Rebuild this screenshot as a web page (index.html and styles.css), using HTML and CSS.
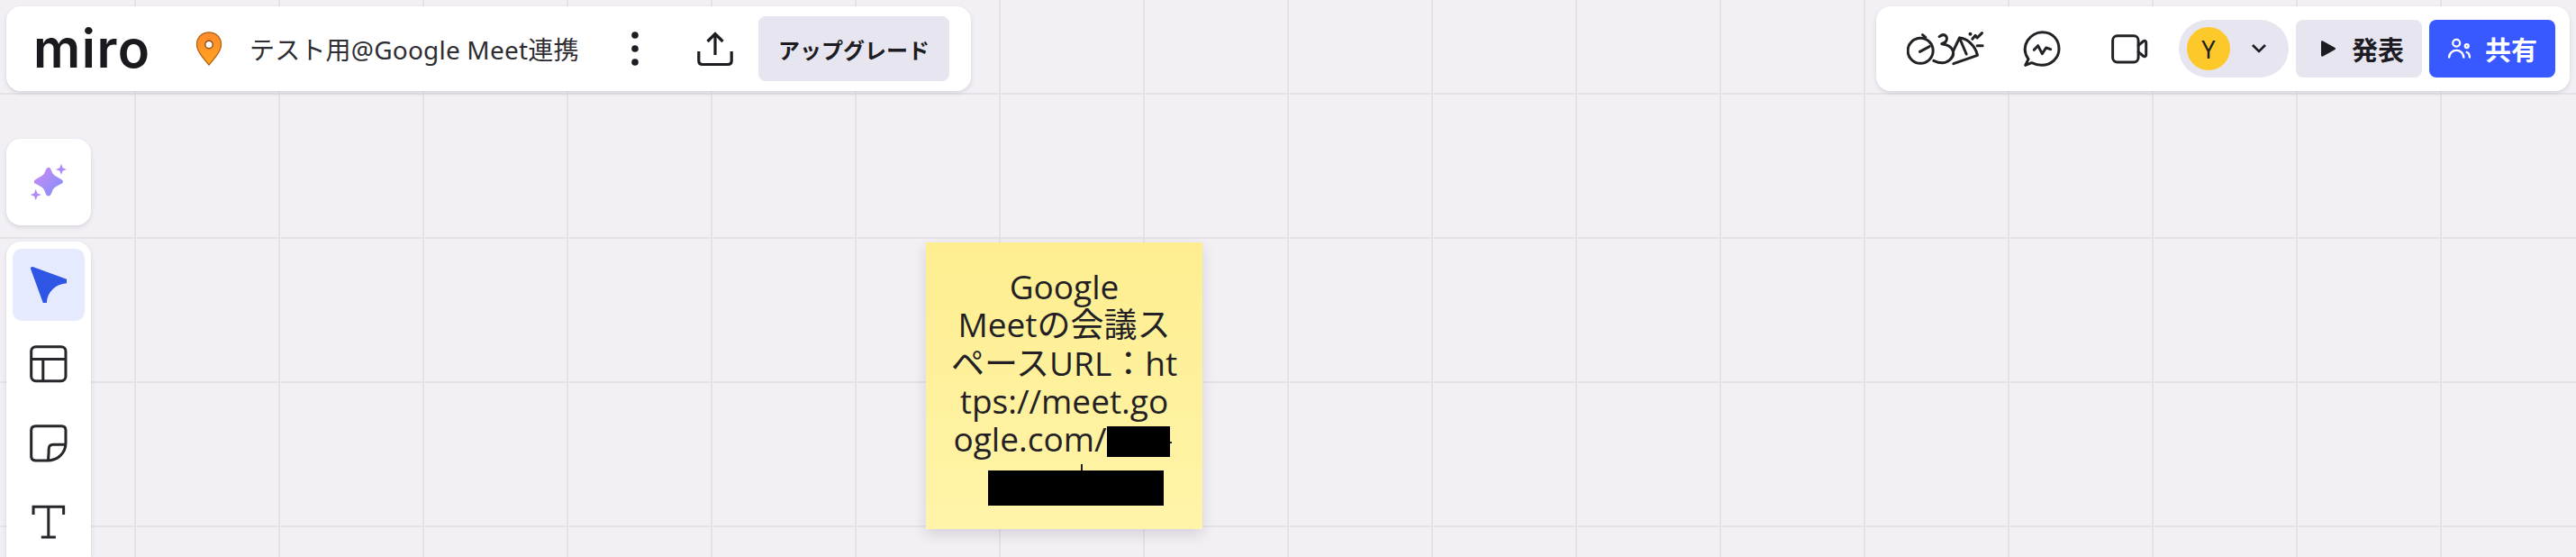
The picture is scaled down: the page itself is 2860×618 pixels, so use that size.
FILE: index.html
```html
<!DOCTYPE html>
<html lang="ja">
<head>
    <meta charset="UTF-8">
    <title>テスト用@Google Meet連携 - Miro</title>
    <link rel="stylesheet" href="styles.css">
</head>
<body>
    <div class="board">
        <header class="topbar">
            <div class="panel panel-left">
                <span class="logo">miro</span>
                <svg class="pin" viewBox="0 0 30 38">
                    <defs>
                        <linearGradient id="pin-fill" x1="0" y1="0" x2="0" y2="1">
                            <stop offset="0" stop-color="#ff8a2e"/>
                            <stop offset="1" stop-color="#ffa51c"/>
                        </linearGradient>
                    </defs>
                    <path d="M15 1C7 1 1.500 6.800 1.500 14.300C1.500 22 9 30 15 37C21 30 28.500 22 28.500 14.300C28.500 6.800 23 1 15 1Z" fill="url(#pin-fill)" stroke="#b8681c" stroke-width="1.400"/>
                    <circle cx="15" cy="14.500" r="4.200" fill="#fff" stroke="#8a4a12" stroke-width="1.400"/>
                </svg>
                <span class="board-title">テスト用@Google Meet連携</span>
                <svg class="kebab" viewBox="0 0 10 38">
                    <circle cx="5" cy="4" r="3.800"/>
                    <circle cx="5" cy="19" r="3.800"/>
                    <circle cx="5" cy="34" r="3.800"/>
                </svg>
                <svg class="upload" viewBox="0 0 40 40">
                    <path d="M20 27V4M11.500 12L20 3.500L28.500 12M1.800 23V33.500C1.800 36 3.500 37.500 6 37.500H34C36.500 37.500 38.200 36 38.200 33.500V23"/>
                </svg>
                <button class="btn btn-grey btn-upgrade">アップグレード</button>
            </div>
            <div class="panel panel-right">
                <svg class="icon-fun" viewBox="170 100 260 120">
                    <circle cx="215" cy="167" r="42"/>
                    <path d="M222 114L232 122M213 170L245 153"/>
                    <path d="M278 120C298 104 310 125 298 138L286 144C325 148 335 178 312 198C296 212 276 208 259 200"/>
                    <path d="M325 210L405 182C398 150 370 125 345 124L368 178M345 124L325 166"/>
                    <path d="M388 128L398 116L404 124L420 108M404 150H422"/>
                    <circle class="dot" cx="381" cy="111" r="6"/>
                </svg>
                <svg class="icon-chat" viewBox="555 95 135 135">
                    <path d="M576 196C545 150 585 106 622 106C660 106 678 135 678 162C678 192 652 216 620 216C606 216 596 212 587 208L566 216Z"/>
                    <path d="M595 165L608 151L622 178L635 158L650 163"/>
                </svg>
                <svg class="icon-video" viewBox="845 110 130 105">
                    <rect x="853" y="118" width="86" height="88" rx="15"/>
                    <path d="M939 150L956 136C960 133 965 135 965 140V182C965 187 960 189 956 186L939 172"/>
                </svg>
                <div class="user-pill">
                    <span class="avatar">Y</span>
                    <svg class="chevron" viewBox="0 0 18 12"><path d="M2 2L9 9L16 2"/></svg>
                </div>
                <button class="btn btn-grey btn-present">
                    <svg class="play" viewBox="0 0 17 18"><path d="M1 1.500C1 0.500 2 0 3 0.500L16.500 8C17.200 8.500 17.200 9.500 16.500 10L3 17.500C2 18 1 17.500 1 16.500Z"/></svg>
                    発表
                </button>
                <button class="btn btn-share">
                    <svg class="users" viewBox="775 125 76 72">
                        <circle cx="803" cy="142" r="12"/>
                        <path d="M778 193C778 158 828 158 828 193"/>
                        <circle cx="838" cy="152" r="6"/>
                        <path d="M835 172C845 174 848 182 848 193"/>
                    </svg>
                    共有
                </button>
            </div>
        </header>

        <aside class="sidebar">
            <div class="panel panel-magic">
                <svg class="sparkle" viewBox="100 124 125 124">
                    <defs>
                        <linearGradient id="spark-fill" x1="0" y1="0" x2="1" y2="1">
                            <stop offset="0" stop-color="#d08af2"/>
                            <stop offset="1" stop-color="#7c8ffb"/>
                        </linearGradient>
                    </defs>
                    <path fill="url(#spark-fill)" d="M162 138C169 138 171 148 176 158C181 166 192 170 204 177C212 182 212 188 204 192C192 198 180 204 176 212C172 222 170 232 162 232C154 232 152 222 148 212C144 204 132 198 120 192C112 188 112 182 120 177C132 170 143 166 148 158C153 148 155 138 162 138Z"/>
                    <path fill="#ad8cf9" d="M204 126L209 139L222 144L209 149L204 162L199 149L186 144L199 139Z"/>
                    <path fill="#ad8cf9" d="M120 209L125 223L138 228L125 233L120 246L115 233L102 228L115 223Z"/>
                </svg>
            </div>
            <div class="panel panel-tools">
                <div class="tool tool-active">
                    <svg class="tool-icon" viewBox="100 465 125 125">
                        <path class="cursor" d="M103 475C103 468 107 467 112 469L222 509V522C185 525 158 550 156 587H144Z"/>
                    </svg>
                </div>
                <div class="tool">
                    <svg class="tool-icon" viewBox="100 40 125 125">
                        <rect x="105" y="45" width="114" height="113" rx="15"/>
                        <path d="M105 86H219M144 86V158"/>
                    </svg>
                </div>
                <div class="tool">
                    <svg class="tool-icon" viewBox="100 304 125 125">
                        <path d="M120 309H205C214 309 219 314 219 323V365C219 398 192 423 160 423H120C110 423 105 418 105 408V323C105 314 110 309 120 309Z"/>
                        <path d="M161 421C162 410 163 400 163 385C163 376 168 370 177 370H219"/>
                    </svg>
                </div>
                <div class="tool">
                    <svg class="tool-icon" viewBox="100 570 125 125">
                        <path d="M112 606V580H212V606M162 580V680M138 680H186"/>
                    </svg>
                </div>
            </div>
        </aside>

        <div class="sticky">
            <p class="sticky-text">Google<br>Meetの会議ス<br>ペースURL：ht<br>tps://meet.go<br>ogle.com/<span class="sticky-gap"></span></p>
            <span class="mask mask-one"></span>
            <span class="mask mask-two"></span>
        </div>
    </div>
</body>
</html>
```

FILE: styles.css
```css
* {
    box-sizing: border-box;
}
html, body {
    margin: 0;
    height: 100%;
    overflow: hidden;
}
body {
    font-family: "Noto Sans", "Noto Sans CJK JP", sans-serif;
    color: #1c1c1e;
}
svg {
    display: block;
    flex: none;
}
.board {
    position: relative;
    display: flex;
    flex-direction: column;
    height: 618px;
    overflow: hidden;
    padding: 7px 7px 0;
    background-color: #f2f0f4;
    background-image:
        linear-gradient(to right, #e5e3e7 2px, transparent 2px),
        linear-gradient(to bottom, #e5e3e7 2px, transparent 2px);
    background-size: 160px 160px;
    background-position: 149px 103px;
}
.panel {
    background: #fff;
    border-radius: 16px;
    box-shadow: 0 2px 5px rgba(20, 10, 60, 0.12);
}
.topbar {
    display: flex;
    flex: none;
    justify-content: space-between;
    height: 94px;
}
.panel-left, .panel-right {
    display: flex;
    align-items: center;
}
.panel-left {
    width: 1071px;
    padding-left: 30px;
}
.panel-right {
    width: 770px;
    padding-left: 34px;
}
.logo {
    width: 131px;
    font-family: Inter, sans-serif;
    font-size: 58px;
    font-weight: 600;
    line-height: 56px;
    letter-spacing: 1.500px;
    color: #1a1a1e;
}
.pin {
    width: 30px;
    height: 38px;
    margin-left: 49px;
}
.board-title {
    width: 423px;
    margin-left: 30px;
    font-size: 28px;
    letter-spacing: 0.200px;
    white-space: nowrap;
    color: #2d2d33;
}
.kebab {
    width: 10px;
    height: 38px;
    fill: #1c1c22;
}
.upload {
    width: 40px;
    height: 40px;
    margin-left: 64px;
    fill: none;
    stroke: #1c1c22;
    stroke-width: 3.200;
}
.btn {
    display: flex;
    align-items: center;
    border: none;
    border-radius: 8px;
    font-family: inherit;
    font-weight: 700;
}
.btn-grey {
    background: #e7e6f0;
    color: #1c1c22;
}
.btn-upgrade {
    justify-content: center;
    width: 212px;
    height: 72px;
    margin-left: 28px;
    font-size: 24px;
}
.icon-fun, .icon-chat, .icon-video {
    fill: none;
    stroke: #222226;
    stroke-width: 9;
    stroke-linecap: round;
    stroke-linejoin: round;
}
.icon-fun {
    width: 87px;
    height: 40px;
}
.icon-fun .dot {
    fill: #222226;
    stroke: none;
}
.icon-chat {
    width: 45px;
    height: 45px;
    margin-left: 41px;
}
.icon-video {
    width: 43px;
    height: 35px;
    margin-left: 53px;
}
.user-pill {
    display: flex;
    align-items: center;
    width: 122px;
    height: 64px;
    margin-left: 33px;
    padding-left: 9px;
    border-radius: 32px;
    background: #e7e6f0;
}
.avatar {
    display: flex;
    align-items: center;
    justify-content: center;
    width: 48px;
    height: 48px;
    border-radius: 50%;
    background: #fcc82a;
    font-size: 27px;
    color: #1c1c22;
}
.chevron {
    width: 18px;
    height: 12px;
    margin-left: 23px;
    fill: none;
    stroke: #1c1c22;
    stroke-width: 2.600;
}
.btn-present, .btn-share {
    width: 140px;
    height: 64px;
    font-size: 29px;
}
.btn-present {
    margin-left: 8px;
    padding-left: 27px;
}
.play {
    width: 17px;
    height: 18px;
    margin-right: 18px;
    fill: #1c1c22;
}
.btn-share {
    margin-left: 8px;
    padding-left: 21px;
    background: #3859ff;
    color: #fff;
}
.users {
    width: 25px;
    height: 24px;
    margin-right: 16px;
    fill: none;
    stroke: #fff;
    stroke-width: 7;
}
.sidebar {
    display: flex;
    flex: 1;
    flex-direction: column;
    gap: 18px;
    min-height: 0;
    width: 94px;
    margin-top: 53px;
}
.panel-magic {
    display: flex;
    flex: none;
    align-items: center;
    justify-content: center;
    height: 96px;
}
.sparkle {
    width: 42px;
    height: 42px;
}
.panel-tools {
    display: flex;
    flex: 1;
    flex-direction: column;
    align-items: center;
    gap: 8px;
    min-height: 0;
    overflow: hidden;
    padding-top: 8px;
    border-radius: 16px 16px 0 0;
}
.tool {
    display: flex;
    flex: none;
    align-items: center;
    justify-content: center;
    width: 80px;
    height: 80px;
    border-radius: 10px;
}
.tool-active {
    background: #e6eaff;
}
.tool-icon {
    width: 42px;
    height: 42px;
    fill: none;
    stroke: #26262b;
    stroke-width: 9;
}
.cursor {
    fill: #2f55e4;
    stroke: none;
}
.sticky {
    position: absolute;
    left: 1028px;
    top: 269px;
    width: 307px;
    height: 318px;
    padding-top: 28px;
    background: linear-gradient(to bottom, #feee90, #fff4a9);
    box-shadow: 0 6px 14px rgba(40, 30, 60, 0.14);
    text-align: center;
    color: #231f24;
}
.sticky-text {
    margin: 0;
    font-family: "Open Sans", "Noto Sans CJK JP", sans-serif;
    font-size: 37px;
    line-height: 42.300px;
    white-space: nowrap;
}
.sticky-gap {
    display: inline-block;
    width: 76px;
}
.mask {
    position: absolute;
    background: #000;
}
.mask-one {
    left: 201px;
    top: 204px;
    width: 70px;
    height: 34px;
}
.mask-two {
    left: 69px;
    top: 253px;
    width: 195px;
    height: 39px;
}
/* bits of the hidden text that stick out past the black boxes */
.mask-one::after {
    content: "";
    position: absolute;
    left: 70px;
    top: 17px;
    width: 2px;
    height: 2px;
    background: #231f24;
}
.mask-two::before {
    content: "";
    position: absolute;
    left: 103px;
    top: -7px;
    width: 2px;
    height: 7px;
    background: #231f24;
}
```
